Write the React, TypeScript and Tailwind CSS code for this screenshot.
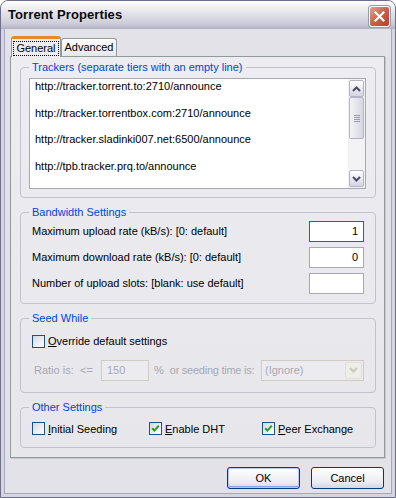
import React from "react";

const trackers = [
  "http://tracker.torrent.to:2710/announce",
  "http://tracker.torrentbox.com:2710/announce",
  "http://tracker.sladinki007.net:6500/announce",
  "http://tpb.tracker.prq.to/announce",
];

function Check({ checked }: { checked?: boolean }) {
  return (
    <span className="w-[13px] h-[13px] shrink-0 border border-[#1c5180] bg-[linear-gradient(135deg,#d8d8dc,#ffffff)] flex items-center justify-center">
      {checked && (
        <svg width="9" height="9" viewBox="0 0 9 9">
          <polyline points="1.2,4.2 3.4,6.6 7.8,1.6" fill="none" stroke="#21a121" strokeWidth="2" />
        </svg>
      )}
    </span>
  );
}

function Chevron({ up, color }: { up?: boolean; color: string }) {
  return (
    <svg width="9" height="6" viewBox="0 0 9 6">
      <polyline
        points={up ? "1,5 4.5,1.5 8,5" : "1,1 4.5,4.5 8,1"}
        fill="none"
        stroke={color}
        strokeWidth="2"
      />
    </svg>
  );
}

function Group({ title, children, className }: { title: string; children: React.ReactNode; className?: string }) {
  return (
    <fieldset className={"border border-[#c2c2cc] rounded-[4px] px-[8px] " + (className ?? "")}>
      <legend className="px-[3px] leading-[13px] text-[#0046d5]">{title}</legend>
      {children}
    </fieldset>
  );
}

function NumBox({ value, focus }: { value?: string; focus?: boolean }) {
  return (
    <div
      className={
        "w-[55px] h-[21px] bg-white border flex items-center justify-end pr-[5px] " +
        (focus ? "border-[#e81818]" : "border-[#a8a8b4]")
      }
    >
      {value}
    </div>
  );
}

export default function App() {
  return (
    <div className="w-[396px] h-[498px] flex flex-col bg-[#d5d5df] border border-[#6e6e88] rounded-t-[8px] overflow-hidden font-['Liberation_Sans',sans-serif] text-[11px] text-black">
      {/* title bar */}
      <div className="h-[28px] shrink-0 flex items-center justify-between pl-[7px] pr-[5px] bg-[linear-gradient(to_bottom,#ffffff,#e2e2ea_45%,#cdcdda_80%,#b2b2c4)]">
        <span className="text-[13px] font-bold text-[#0a0a0a] tracking-[0.1px]">Torrent Properties</span>
        <div className="w-[21px] h-[21px] mt-[2px] rounded-[3px] border border-white bg-[linear-gradient(135deg,#e8a090,#cc5a44_55%,#b8402c)] flex items-center justify-center shadow-[0_0_0_1px_#9a9aae]">
          <svg width="11" height="11" viewBox="0 0 11 11">
            <path d="M1.5 1.5 L9.5 9.5 M9.5 1.5 L1.5 9.5" stroke="white" strokeWidth="2.2" strokeLinecap="square" />
          </svg>
        </div>
      </div>

      {/* client */}
      <div className="flex-1 mx-[3px] mb-[3px] flex flex-col bg-[#e2e2e8] border-x border-b border-[#a8a8bc] pl-[5px] pr-[6px] pt-[7px]">
        {/* tabs */}
        <div className="flex items-end h-[20px] pl-[1px]">
          <div className="relative z-10 -mb-px h-[21px] w-[50px] bg-[#ededf1] border-x border-[#919b9c] rounded-t-[3px] border-t-[3px] border-t-[#e68b2c] flex items-center justify-center">
            <span className="outline outline-1 outline-dotted outline-black px-[2px] leading-[13px]">General</span>
          </div>
          <div className="h-[18px] w-[56px] border border-b-0 border-[#919b9c] rounded-t-[3px] bg-[linear-gradient(to_bottom,#ffffff,#e6e6ec)] flex items-center justify-center">
            Advanced
          </div>
        </div>

        {/* panel */}
        <div className="h-[402px] border border-[#919b9c] shadow-[1px_1px_0_#c8c8d0] bg-[linear-gradient(to_bottom,#ededf1,#e6e6eb)] pl-[9px] pr-[8px] pt-[4px] flex flex-col gap-[8px]">
          <Group title="Trackers (separate tiers with an empty line)" className="pb-[8px] pr-[9px]">
            <div className="mt-[4px] h-[111px] bg-white border border-[#a8a8b4] flex">
              <div className="flex-1 pl-[5px] pt-[1px] leading-[13.33px]">
                {trackers.map((t) => (
                  <div key={t} className="mb-[13.33px]">
                    {t}
                  </div>
                ))}
              </div>
              <div className="w-[17px] flex flex-col bg-[#f3f3f6] border-l border-[#f0f0f0] py-[1px] pr-[1px]">
                <div className="h-[17px] border border-[#b4b4c4] rounded-[2px] bg-[linear-gradient(to_bottom,#ffffff,#d4d4e0)] flex items-center justify-center">
                  <Chevron up color="#4a4a66" />
                </div>
                <div className="h-[42px] border border-[#b4b4c4] rounded-[2px] bg-[linear-gradient(to_right,#f4f4f8,#d6d6e2)] flex flex-col items-center justify-center gap-[1px]">
                  <span className="w-[6px] h-px bg-[#9a9aaa]" />
                  <span className="w-[6px] h-px bg-[#9a9aaa]" />
                  <span className="w-[6px] h-px bg-[#9a9aaa]" />
                  <span className="w-[6px] h-px bg-[#9a9aaa]" />
                </div>
                <div className="flex-1" />
                <div className="h-[17px] border border-[#b4b4c4] rounded-[2px] bg-[linear-gradient(to_bottom,#ffffff,#d4d4e0)] flex items-center justify-center">
                  <Chevron color="#4a4a66" />
                </div>
              </div>
            </div>
          </Group>

          <Group title="Bandwidth Settings" className="pb-[9px]">
            <div className="mt-[2px] pl-[3px] pr-[3px] flex flex-col gap-[5px]">
              <div className="flex items-center justify-between">
                <span>Maximum upload rate (kB/s): [0: default]</span>
                <NumBox value="1" focus />
              </div>
              <div className="flex items-center justify-between">
                <span>Maximum download rate (kB/s): [0: default]</span>
                <NumBox value="0" />
              </div>
              <div className="flex items-center justify-between">
                <span>Number of upload slots: [blank: use default]</span>
                <NumBox />
              </div>
            </div>
          </Group>

          <Group title="Seed While" className="pb-[11px]">
            <div className="mt-[8px] pl-[3px] flex items-center gap-[3px]">
              <Check />
              <span>
                <u>O</u>verride default settings
              </span>
            </div>
            <div className="mt-[10px] pl-[5px] pr-[3px] flex items-center whitespace-nowrap text-[#a8a8b2]">
              <span className="w-[46px]">Ratio is:</span>
              <span className="w-[21px]">&lt;=</span>
              <div className="w-[48px] h-[21px] border border-[#cfcdc2] bg-[#ececf0] pl-[5px] flex items-center">150</div>
              <span className="ml-[5px]">%</span>
              <span className="ml-[6px] tracking-[-0.25px]">or seeding time is:</span>
              <div className="ml-auto w-[103px] h-[21px] border border-[#cfcdc2] bg-[#ececf0] flex items-center">
                <span className="flex-1 pl-[3px]">(Ignore)</span>
                <div className="w-[17px] h-[17px] mr-[1px] rounded-[2px] bg-[#eeeee8] border border-[#e0ded6] flex items-center justify-center">
                  <Chevron color="#c9c7ba" />
                </div>
              </div>
            </div>
          </Group>

          <Group title="Other Settings" className="pb-[10px]">
            <div className="mt-[7px] pl-[3px] flex items-center">
              <div className="w-[117px] flex items-center gap-[3px]">
                <Check />
                <span>
                  <u>I</u>nitial Seeding
                </span>
              </div>
              <div className="w-[113px] flex items-center gap-[3px]">
                <Check checked />
                <span>
                  <u>E</u>nable DHT
                </span>
              </div>
              <div className="flex items-center gap-[3px]">
                <Check checked />
                <span>
                  <u>P</u>eer Exchange
                </span>
              </div>
            </div>
          </Group>
        </div>

        {/* buttons */}
        <div className="mt-[9px] flex justify-end gap-[11px] pr-[1px]">
          <button className="w-[73px] h-[22px] rounded-[3px] border border-[#003c74] bg-[linear-gradient(to_bottom,#ffffff,#ececf2_70%,#d6d6e0)] shadow-[inset_0_0_0_1px_#b8c8f0,inset_0_-1px_0_1px_#8aa4e0]">
            OK
          </button>
          <button className="w-[73px] h-[22px] rounded-[3px] border border-[#003c74] bg-[linear-gradient(to_bottom,#ffffff,#ececf2_70%,#d6d6e0)]">
            Cancel
          </button>
        </div>
      </div>
    </div>
  );
}
